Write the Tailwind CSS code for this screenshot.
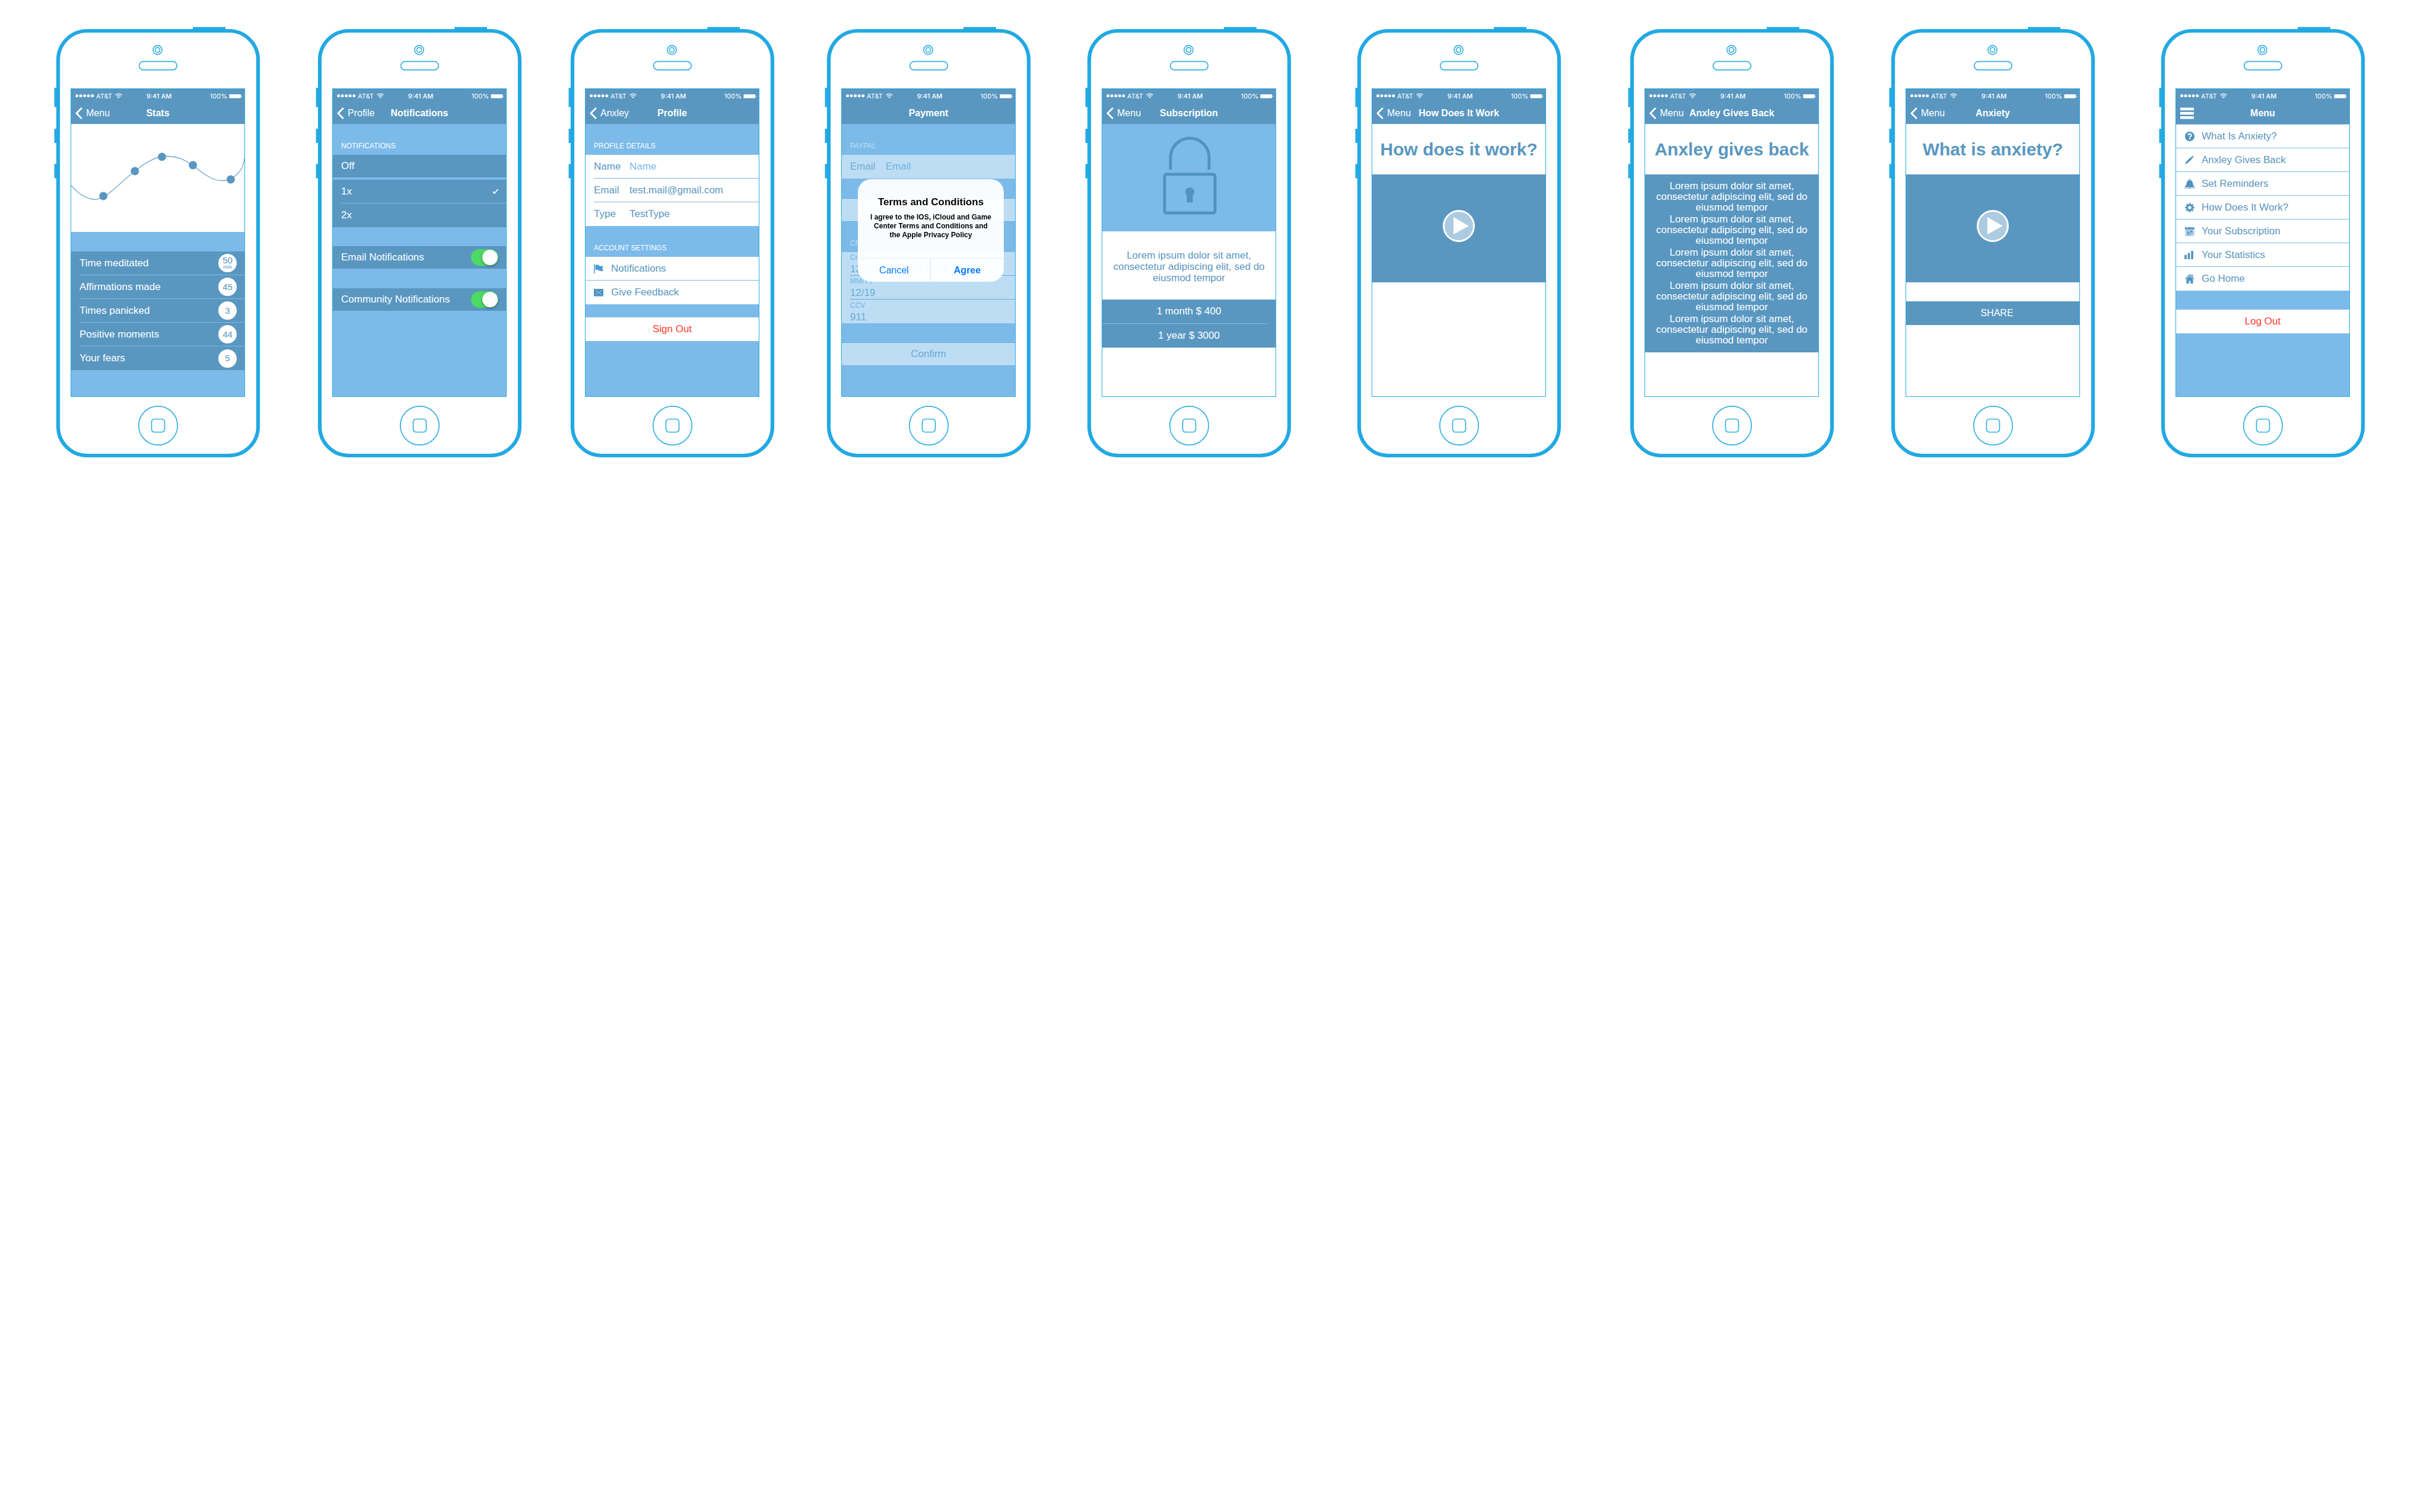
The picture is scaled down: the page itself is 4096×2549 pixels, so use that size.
<!DOCTYPE html>
<html lang="en">
<head>
<meta charset="utf-8">
<title>Anxley – app screens</title>
<script src="https://cdn.jsdelivr.net/npm/@tailwindcss/browser@4"></script>
</head>
<body class="min-h-screen bg-white font-['Liberation_Sans',Arial,sans-serif] text-[17px] leading-5 text-[#5997c1]">

<!-- Shared shapes -->
<svg class="hidden">
  <symbol id="frame" viewBox="-4 -4 351 726">
    <g fill="#27abe3">
      <rect x="-3.5" y="99" width="6" height="32.5"/>
      <rect x="-3.5" y="168" width="6" height="24"/>
      <rect x="-3.5" y="227.5" width="6" height="24"/>
      <rect x="230" y="-3.5" width="55" height="5"/>
    </g>
    <rect x="3" y="3" width="337" height="716" rx="49" fill="#fff" stroke="#22a9e3" stroke-width="6.2"/>
    <g fill="none" stroke="#33b0e5" stroke-width="1.7">
      <circle cx="170.5" cy="35.2" r="7.6"/>
      <circle cx="170.5" cy="35.2" r="4"/>
      <rect x="139.7" y="54.7" width="63.5" height="14.2" rx="7"/>
      <circle cx="171.5" cy="668.5" r="32.7"/>
      <rect x="160.5" y="657.5" width="22" height="22" rx="5"/>
    </g>
  </symbol>
  <symbol id="signal" viewBox="0 0 32 5">
    <g fill="#fff"><circle cx="2.6" cy="2.5" r="2.5"/><circle cx="9.1" cy="2.5" r="2.5"/><circle cx="15.7" cy="2.5" r="2.5"/><circle cx="22.2" cy="2.5" r="2.5"/><circle cx="28.8" cy="2.5" r="2.5"/></g>
  </symbol>
  <symbol id="wifi" viewBox="0 0 12 9">
    <g fill="none" stroke="#fff" stroke-width="1.4"><path d="M.6 3.3a7.7 7.7 0 0 1 10.800 0"/><path d="M2.6 5.4a4.9 4.9 0 0 1 6.800 0"/></g>
    <path fill="#fff" d="M4.2 6.900a2.6 2.6 0 0 1 3.600 0L6 8.700z"/>
  </symbol>
  <symbol id="battery" viewBox="0 0 23 8">
    <rect x=".4" y=".9" width="19.7" height="6.7" rx="1" fill="#fff"/><path d="M21.2 2.700c1.400.5 1.400 2.500 0 3z" fill="#fff"/>
  </symbol>
  <symbol id="back" viewBox="0 0 12 20">
    <path d="M10.800 1 2 10l8.800 9" fill="none" stroke="#fff" stroke-width="2.8"/>
  </symbol>
  <symbol id="play" viewBox="0 0 54 54">
    <circle cx="27" cy="27" r="25.5" fill="#fff" fill-opacity=".5" stroke="#fff" stroke-width="3"/>
    <path d="M18 12 44 27 18 41z" fill="#fff"/>
  </symbol>
</svg>

<main class="grid grid-cols-[95fr_343px_98fr_343px_83fr_343px_89fr_343px_96fr_343px_112fr_343px_117fr_343px_97fr_343px_112fr_343px_110fr] items-start pt-[49px]">

  <!-- Stats -->
  <article class="relative col-start-2 pt-[100px] pr-[25px] pb-[102px] pl-6">
    <svg class="absolute -top-1 -left-1 h-[726px] w-[351px]"><use href="#frame"/></svg>
    <div class="relative flex h-[520px] flex-col border border-[#27abe3] bg-[#7cbbe9] text-white">
      <header class="bg-[#5997c1]">
        <div class="grid h-[23px] grid-cols-3 items-center px-[7px] pr-[3px] font-['Inter',sans-serif] text-[11px] leading-4">
          <span class="flex items-center gap-[3px]"><svg class="h-[5px] w-8 shrink-0"><use href="#signal"/></svg>AT&amp;T<svg class="ml-0.5 h-[9px] w-3 shrink-0"><use href="#wifi"/></svg></span>
          <span class="text-center font-medium">9:41 AM</span>
          <span class="flex items-center justify-end gap-[3px]">100%<svg class="h-2 w-[23px]"><use href="#battery"/></svg></span>
        </div>
        <div class="grid h-9 items-center text-[16px]">
          <a href="#" class="col-start-1 row-start-1 flex items-center gap-1.5 justify-self-start pl-[7px]"><svg class="h-5 w-3"><use href="#back"/></svg>Menu</a>
          <h1 class="pointer-events-none col-start-1 row-start-1 text-center font-bold">Stats</h1>
        </div>
      </header>
      <svg class="block h-[182px] w-full bg-white" viewBox="0 0 291 182" preserveAspectRatio="none">
        <path d="M0 103.5C12 119 27 127 41 127 59 127 79 101 107 79.5 127 63 143 54.5 160.5 54.5 178 54.5 190 60 204.5 69.5 221 83 236 95.5 253 95.5 272 95.5 289 80 291 58" fill="none" stroke="#6fa5ca" stroke-width="1.3"/>
        <g fill="#5997c1"><circle cx="54" cy="121.5" r="6.9"/><circle cx="107" cy="79.5" r="6.9"/><circle cx="152.5" cy="55.3" r="6.9"/><circle cx="204.5" cy="69.5" r="6.9"/><circle cx="268" cy="93.5" r="6.9"/></g>
      </svg>
      <ul class="mt-[33px] bg-[#5997c1] pl-3.5">
        <li class="flex h-10 items-center justify-between border-b border-[#7cbbe9] pr-[13px]">Time meditated <span class="flex size-[31px] flex-col items-center justify-center rounded-full bg-white text-[15px] leading-[14px] text-[#5997c1]">50<span class="text-[9px] leading-[9px]">min</span></span></li>
        <li class="flex h-10 items-center justify-between border-b border-[#7cbbe9] pr-[13px]">Affirmations made <span class="flex size-[31px] items-center justify-center rounded-full bg-white text-[15px] text-[#5997c1]">45</span></li>
        <li class="flex h-10 items-center justify-between border-b border-[#7cbbe9] pr-[13px]">Times panicked <span class="flex size-[31px] items-center justify-center rounded-full bg-white text-[15px] text-[#5997c1]">3</span></li>
        <li class="flex h-10 items-center justify-between border-b border-[#7cbbe9] pr-[13px]">Positive moments <span class="flex size-[31px] items-center justify-center rounded-full bg-white text-[15px] text-[#5997c1]">44</span></li>
        <li class="flex h-10 items-center justify-between pr-[13px]">Your fears <span class="flex size-[31px] items-center justify-center rounded-full bg-white text-[15px] text-[#5997c1]">5</span></li>
      </ul>
    </div>
  </article>

  <!-- Notifications -->
  <article class="relative col-start-4 pt-[100px] pr-[25px] pb-[102px] pl-6">
    <svg class="absolute -top-1 -left-1 h-[726px] w-[351px]"><use href="#frame"/></svg>
    <div class="relative flex h-[520px] flex-col border border-[#27abe3] bg-[#7cbbe9] text-white">
      <header class="bg-[#5997c1]">
        <div class="grid h-[23px] grid-cols-3 items-center px-[7px] pr-[3px] font-['Inter',sans-serif] text-[11px] leading-4">
          <span class="flex items-center gap-[3px]"><svg class="h-[5px] w-8 shrink-0"><use href="#signal"/></svg>AT&amp;T<svg class="ml-0.5 h-[9px] w-3 shrink-0"><use href="#wifi"/></svg></span>
          <span class="text-center font-medium">9:41 AM</span>
          <span class="flex items-center justify-end gap-[3px]">100%<svg class="h-2 w-[23px]"><use href="#battery"/></svg></span>
        </div>
        <div class="grid h-9 items-center text-[16px]">
          <a href="#" class="col-start-1 row-start-1 flex items-center gap-1.5 justify-self-start pl-[7px]"><svg class="h-5 w-3"><use href="#back"/></svg>Profile</a>
          <h1 class="pointer-events-none col-start-1 row-start-1 text-center font-bold">Notifications</h1>
        </div>
      </header>
      <fieldset>
        <legend class="flex h-[52px] items-end pb-[7px] pl-3.5 text-[12px] leading-4">NOTIFICATIONS</legend>
        <label class="flex h-[38px] items-center justify-between bg-[#5997c1] pr-[13px] pl-3.5"><input type="radio" name="frequency" class="peer sr-only">Off<svg class="hidden h-[9px] w-2.5 peer-checked:block" viewBox="0 0 10 9"><path d="M.7 5 3.5 7.8 9.3 1" fill="none" stroke="#fff" stroke-width="1.8"/></svg></label>
        <div class="mt-1 bg-[#5997c1] pl-3.5">
          <label class="flex h-10 items-center justify-between border-b border-[#7cbbe9] pr-[13px]"><input type="radio" name="frequency" class="peer sr-only" checked>1x<svg class="hidden h-[9px] w-2.5 peer-checked:block" viewBox="0 0 10 9"><path d="M.7 5 3.5 7.8 9.3 1" fill="none" stroke="#fff" stroke-width="1.8"/></svg></label>
          <label class="flex h-10 items-center justify-between pr-[13px]"><input type="radio" name="frequency" class="peer sr-only">2x<svg class="hidden h-[9px] w-2.5 peer-checked:block" viewBox="0 0 10 9"><path d="M.7 5 3.5 7.8 9.3 1" fill="none" stroke="#fff" stroke-width="1.8"/></svg></label>
        </div>
      </fieldset>
      <label class="mt-8 flex h-[38px] items-center justify-between bg-[#5997c1] pr-[13px] pl-3.5">Email Notifications<input type="checkbox" checked class="flex h-7 w-[46px] appearance-none items-center rounded-full bg-[#7cbbe9] p-px before:size-[26px] before:rounded-full before:bg-white before:shadow-[0_2px_4px_rgba(0,0,0,0.35)] checked:justify-end checked:bg-[#4cd964]"></label>
      <label class="mt-[33px] flex h-[38px] items-center justify-between bg-[#5997c1] pr-[13px] pl-3.5">Community Notifications<input type="checkbox" checked class="flex h-7 w-[46px] appearance-none items-center rounded-full bg-[#7cbbe9] p-px before:size-[26px] before:rounded-full before:bg-white before:shadow-[0_2px_4px_rgba(0,0,0,0.35)] checked:justify-end checked:bg-[#4cd964]"></label>
    </div>
  </article>

  <!-- Profile -->
  <article class="relative col-start-6 pt-[100px] pr-[25px] pb-[102px] pl-6">
    <svg class="absolute -top-1 -left-1 h-[726px] w-[351px]"><use href="#frame"/></svg>
    <div class="relative flex h-[520px] flex-col border border-[#27abe3] bg-[#7cbbe9]">
      <header class="bg-[#5997c1] text-white">
        <div class="grid h-[23px] grid-cols-3 items-center px-[7px] pr-[3px] font-['Inter',sans-serif] text-[11px] leading-4">
          <span class="flex items-center gap-[3px]"><svg class="h-[5px] w-8 shrink-0"><use href="#signal"/></svg>AT&amp;T<svg class="ml-0.5 h-[9px] w-3 shrink-0"><use href="#wifi"/></svg></span>
          <span class="text-center font-medium">9:41 AM</span>
          <span class="flex items-center justify-end gap-[3px]">100%<svg class="h-2 w-[23px]"><use href="#battery"/></svg></span>
        </div>
        <div class="grid h-9 items-center text-[16px]">
          <a href="#" class="col-start-1 row-start-1 flex items-center gap-1.5 justify-self-start pl-[7px]"><svg class="h-5 w-3"><use href="#back"/></svg>Anxley</a>
          <h1 class="pointer-events-none col-start-1 row-start-1 text-center font-bold">Profile</h1>
        </div>
      </header>
      <h2 class="flex h-[52px] items-end pb-[7px] pl-3.5 text-[12px] leading-4 text-white">PROFILE DETAILS</h2>
      <div class="bg-white pl-3.5">
        <div class="flex h-10 items-center border-b border-[#7cbbe9]"><label for="name" class="w-[60px]">Name</label><input id="name" type="text" placeholder="Name" class="min-w-0 flex-1 placeholder:text-[#7cbbe9] placeholder:opacity-100"></div>
        <div class="flex h-10 items-center border-b border-[#8fb4cc]"><label for="email" class="w-[60px]">Email</label><input id="email" type="email" value="test.mail@gmail.com" class="min-w-0 flex-1"></div>
        <div class="flex h-10 items-center"><label for="type" class="w-[60px]">Type</label><input id="type" type="text" value="TestType" class="min-w-0 flex-1"></div>
      </div>
      <h2 class="flex h-[52px] items-end pb-[7px] pl-3.5 text-[12px] leading-4 text-white">ACCOUNT SETTINGS</h2>
      <nav class="bg-white">
        <a href="#" class="flex h-10 items-center gap-[13px] border-b border-[#7cbbe9] pl-3.5">
          <svg class="h-4 w-4" viewBox="0 0 16 16" fill="#4f9bd0"><path d="M0 .5h1.600V16H0z"/><path d="M2.600 1.500C5 .8 6.500 1.300 8.500 2.600 10.500 4 13 4.200 16 3l-1.800 4.400L16 11.600c-3 1-5.200.6-7.300-.6C6.500 9.700 5 9.500 2.600 10.300z"/></svg>Notifications</a>
        <a href="#" class="flex h-10 items-center gap-[13px] pl-3.5">
          <svg class="h-4 w-4" viewBox="0 0 16 16"><path fill="#4f93c1" d="M0 2h16v12.500H0z"/><path d="m3 4.500 5 4.200 5-4.200M3 12l3.500-3.200M13 12 9.500 8.800" fill="none" stroke="#cfe2f0" stroke-width=".8"/></svg>Give Feedback</a>
      </nav>
      <button type="button" class="mt-[22px] h-10 bg-white text-[#ff3b30]">Sign Out</button>
    </div>
  </article>

  <!-- Payment -->
  <article class="relative col-start-8 pt-[100px] pr-[25px] pb-[102px] pl-6">
    <svg class="absolute -top-1 -left-1 h-[726px] w-[351px]"><use href="#frame"/></svg>
    <div class="relative flex h-[520px] flex-col border border-[#27abe3] bg-[#7cbbe9]">
      <header class="bg-[#5997c1] text-white">
        <div class="grid h-[23px] grid-cols-3 items-center px-[7px] pr-[3px] font-['Inter',sans-serif] text-[11px] leading-4">
          <span class="flex items-center gap-[3px]"><svg class="h-[5px] w-8 shrink-0"><use href="#signal"/></svg>AT&amp;T<svg class="ml-0.5 h-[9px] w-3 shrink-0"><use href="#wifi"/></svg></span>
          <span class="text-center font-medium">9:41 AM</span>
          <span class="flex items-center justify-end gap-[3px]">100%<svg class="h-2 w-[23px]"><use href="#battery"/></svg></span>
        </div>
        <h1 class="flex h-9 items-center justify-center text-[16px] font-bold">Payment</h1>
      </header>
      <form class="flex flex-col opacity-50">
        <h2 class="flex h-[52px] items-end pb-[7px] pl-3.5 text-[12px] leading-4 text-white">PAYPAL</h2>
        <div class="flex h-10 items-center bg-white pl-3.5"><label for="paypal" class="w-[60px]">Email</label><input id="paypal" type="email" placeholder="Email" class="min-w-0 flex-1 placeholder:text-[#5ba8df] placeholder:opacity-100"></div>
        <button type="button" class="mt-[33px] h-10 border-y border-[#5997c1] bg-white">Confirm</button>
        <h2 class="flex h-[51px] items-end pb-[7px] pl-3.5 text-[12px] leading-4 text-white">CREDIT CARD</h2>
        <div class="bg-white pl-3.5">
          <div class="flex h-10 flex-col justify-end border-b border-[#4b9bd6]"><label for="card" class="text-[12px] leading-4 text-[#5ba8df]">Credit Card Number</label><input id="card" type="text" value="1234 5678 1234 5678" class="h-[22px] pt-0.5"></div>
          <div class="flex h-10 flex-col justify-end border-b border-[#4b9bd6]"><label for="expiry" class="text-[12px] leading-4 text-[#5ba8df]">MM/YY</label><input id="expiry" type="text" value="12/19" class="h-[22px] pt-0.5"></div>
          <div class="flex h-10 flex-col justify-end"><label for="ccv" class="text-[12px] leading-4 text-[#5ba8df]">CCV</label><input id="ccv" type="text" value="911" class="h-[22px] pt-0.5"></div>
        </div>
        <button type="button" class="mt-8 h-10 border-y border-[#5997c1] bg-white">Confirm</button>
      </form>
      <div role="dialog" aria-labelledby="terms" class="absolute top-[152px] left-[27px] w-[246px] rounded-[22px] bg-white/95 pt-7 text-center text-black">
        <h2 id="terms" class="leading-[22px] font-bold">Terms and Conditions</h2>
        <p class="mt-[7px] px-3.5 pb-[31px] text-[12px] leading-[15px] font-bold">I agree to the IOS, iCloud and Game Center Terms and Conditions and<br>the Apple Privacy Policy</p>
        <div class="grid h-10 grid-cols-2 divide-x divide-[#dfe6ea] border-t border-[#e9eef1] text-[16px] text-[#007aff]">
          <button type="button">Cancel</button>
          <button type="button" class="font-bold">Agree</button>
        </div>
      </div>
    </div>
  </article>

  <!-- Subscription -->
  <article class="relative col-start-10 pt-[100px] pr-[25px] pb-[102px] pl-6">
    <svg class="absolute -top-1 -left-1 h-[726px] w-[351px]"><use href="#frame"/></svg>
    <div class="relative flex h-[520px] flex-col border border-[#27abe3] bg-white">
      <header class="bg-[#5997c1] text-white">
        <div class="grid h-[23px] grid-cols-3 items-center px-[7px] pr-[3px] font-['Inter',sans-serif] text-[11px] leading-4">
          <span class="flex items-center gap-[3px]"><svg class="h-[5px] w-8 shrink-0"><use href="#signal"/></svg>AT&amp;T<svg class="ml-0.5 h-[9px] w-3 shrink-0"><use href="#wifi"/></svg></span>
          <span class="text-center font-medium">9:41 AM</span>
          <span class="flex items-center justify-end gap-[3px]">100%<svg class="h-2 w-[23px]"><use href="#battery"/></svg></span>
        </div>
        <div class="grid h-9 items-center text-[16px]">
          <a href="#" class="col-start-1 row-start-1 flex items-center gap-1.5 justify-self-start pl-[7px]"><svg class="h-5 w-3"><use href="#back"/></svg>Menu</a>
          <h1 class="pointer-events-none col-start-1 row-start-1 text-center font-bold">Subscription</h1>
        </div>
      </header>
      <svg class="block h-[181px] w-full bg-[#7cbbe9]" viewBox="0 0 291 181">
        <g fill="none" stroke="#5093c0" stroke-width="5"><path d="M114.500 77V56.500a32.500 32.500 0 0 1 65 0V77"/><rect x="104.5" y="84.8" width="85" height="65.2" rx="3.5"/></g>
        <circle cx="147" cy="114.7" r="7.6" fill="#5093c0"/><path d="M142 116h10v16.300h-10z" fill="#5093c0"/>
      </svg>
      <p class="h-[115px] px-3 pt-[31px] text-center leading-[19px]">Lorem ipsum dolor sit amet, consectetur adipiscing elit, sed do eiusmod tempor</p>
      <div class="flex flex-col bg-[#5997c1] text-white">
        <button type="button" class="h-10">1 month $ 400</button>
        <hr class="mr-3.5 border-t border-[#7cbbe9]">
        <button type="button" class="h-10">1 year $ 3000</button>
      </div>
    </div>
  </article>

  <!-- How does it work -->
  <article class="relative col-start-12 pt-[100px] pr-[25px] pb-[102px] pl-6">
    <svg class="absolute -top-1 -left-1 h-[726px] w-[351px]"><use href="#frame"/></svg>
    <div class="relative flex h-[520px] flex-col border border-[#27abe3] bg-white">
      <header class="bg-[#5997c1] text-white">
        <div class="grid h-[23px] grid-cols-3 items-center px-[7px] pr-[3px] font-['Inter',sans-serif] text-[11px] leading-4">
          <span class="flex items-center gap-[3px]"><svg class="h-[5px] w-8 shrink-0"><use href="#signal"/></svg>AT&amp;T<svg class="ml-0.5 h-[9px] w-3 shrink-0"><use href="#wifi"/></svg></span>
          <span class="text-center font-medium">9:41 AM</span>
          <span class="flex items-center justify-end gap-[3px]">100%<svg class="h-2 w-[23px]"><use href="#battery"/></svg></span>
        </div>
        <div class="grid h-9 items-center text-[16px]">
          <a href="#" class="col-start-1 row-start-1 flex items-center gap-1.5 justify-self-start pl-[7px]"><svg class="h-5 w-3"><use href="#back"/></svg>Menu</a>
          <h1 class="pointer-events-none col-start-1 row-start-1 text-center font-bold">How Does It Work</h1>
        </div>
      </header>
      <h2 class="flex h-[85px] items-center justify-center text-[30px] font-bold whitespace-nowrap">How does it work?</h2>
      <div class="flex h-[182px] items-center justify-center bg-[#5997c1] pb-[9px]"><button type="button" aria-label="Play" class="size-[54px]"><svg class="size-full"><use href="#play"/></svg></button></div>
    </div>
  </article>

  <!-- Anxley gives back -->
  <article class="relative col-start-14 pt-[100px] pr-[25px] pb-[102px] pl-6">
    <svg class="absolute -top-1 -left-1 h-[726px] w-[351px]"><use href="#frame"/></svg>
    <div class="relative flex h-[520px] flex-col border border-[#27abe3] bg-white">
      <header class="bg-[#5997c1] text-white">
        <div class="grid h-[23px] grid-cols-3 items-center px-[7px] pr-[3px] font-['Inter',sans-serif] text-[11px] leading-4">
          <span class="flex items-center gap-[3px]"><svg class="h-[5px] w-8 shrink-0"><use href="#signal"/></svg>AT&amp;T<svg class="ml-0.5 h-[9px] w-3 shrink-0"><use href="#wifi"/></svg></span>
          <span class="text-center font-medium">9:41 AM</span>
          <span class="flex items-center justify-end gap-[3px]">100%<svg class="h-2 w-[23px]"><use href="#battery"/></svg></span>
        </div>
        <div class="grid h-9 items-center text-[16px]">
          <a href="#" class="col-start-1 row-start-1 flex items-center gap-1.5 justify-self-start pl-[7px]"><svg class="h-5 w-3"><use href="#back"/></svg>Menu</a>
          <h1 class="pointer-events-none col-start-1 row-start-1 text-center font-bold">Anxley Gives Back</h1>
        </div>
      </header>
      <h2 class="flex h-[85px] items-center justify-center text-[30px] font-bold whitespace-nowrap">Anxley gives back</h2>
      <div class="flex flex-col gap-0.5 bg-[#5997c1] px-3 py-[11px] text-center leading-[18px] text-white">
        <p>Lorem ipsum dolor sit amet, consectetur adipiscing elit, sed do eiusmod tempor</p>
        <p>Lorem ipsum dolor sit amet, consectetur adipiscing elit, sed do eiusmod tempor</p>
        <p>Lorem ipsum dolor sit amet, consectetur adipiscing elit, sed do eiusmod tempor</p>
        <p>Lorem ipsum dolor sit amet, consectetur adipiscing elit, sed do eiusmod tempor</p>
        <p>Lorem ipsum dolor sit amet, consectetur adipiscing elit, sed do eiusmod tempor</p>
      </div>
    </div>
  </article>

  <!-- Anxiety -->
  <article class="relative col-start-16 pt-[100px] pr-[25px] pb-[102px] pl-6">
    <svg class="absolute -top-1 -left-1 h-[726px] w-[351px]"><use href="#frame"/></svg>
    <div class="relative flex h-[520px] flex-col border border-[#27abe3] bg-white">
      <header class="bg-[#5997c1] text-white">
        <div class="grid h-[23px] grid-cols-3 items-center px-[7px] pr-[3px] font-['Inter',sans-serif] text-[11px] leading-4">
          <span class="flex items-center gap-[3px]"><svg class="h-[5px] w-8 shrink-0"><use href="#signal"/></svg>AT&amp;T<svg class="ml-0.5 h-[9px] w-3 shrink-0"><use href="#wifi"/></svg></span>
          <span class="text-center font-medium">9:41 AM</span>
          <span class="flex items-center justify-end gap-[3px]">100%<svg class="h-2 w-[23px]"><use href="#battery"/></svg></span>
        </div>
        <div class="grid h-9 items-center text-[16px]">
          <a href="#" class="col-start-1 row-start-1 flex items-center gap-1.5 justify-self-start pl-[7px]"><svg class="h-5 w-3"><use href="#back"/></svg>Menu</a>
          <h1 class="pointer-events-none col-start-1 row-start-1 text-center font-bold">Anxiety</h1>
        </div>
      </header>
      <h2 class="flex h-[85px] items-center justify-center text-[30px] font-bold whitespace-nowrap">What is anxiety?</h2>
      <div class="flex h-[182px] items-center justify-center bg-[#5997c1] pb-[9px]"><button type="button" aria-label="Play" class="size-[54px]"><svg class="size-full"><use href="#play"/></svg></button></div>
      <button type="button" class="mt-8 h-10 bg-[#5997c1] pl-3.5 text-[16px] text-white">SHARE</button>
    </div>
  </article>

  <!-- Menu -->
  <article class="relative col-start-18 pt-[100px] pr-[25px] pb-[102px] pl-6">
    <svg class="absolute -top-1 -left-1 h-[726px] w-[351px]"><use href="#frame"/></svg>
    <div class="relative flex h-[520px] flex-col border border-[#27abe3] bg-[#7cbbe9]">
      <header class="bg-[#5997c1] text-white">
        <div class="grid h-[23px] grid-cols-3 items-center px-[7px] pr-[3px] font-['Inter',sans-serif] text-[11px] leading-4">
          <span class="flex items-center gap-[3px]"><svg class="h-[5px] w-8 shrink-0"><use href="#signal"/></svg>AT&amp;T<svg class="ml-0.5 h-[9px] w-3 shrink-0"><use href="#wifi"/></svg></span>
          <span class="text-center font-medium">9:41 AM</span>
          <span class="flex items-center justify-end gap-[3px]">100%<svg class="h-2 w-[23px]"><use href="#battery"/></svg></span>
        </div>
        <div class="grid h-9 items-center text-[16px]">
          <button type="button" aria-label="Close menu" class="col-start-1 row-start-1 ml-[7px] justify-self-start"><svg class="block h-5 w-[23px]" viewBox="0 0 23 20"><path d="M0 .5h23v4.500H0zM0 7.800h23v4.500H0zM0 15.100h23v4.500H0z" fill="#fff"/></svg></button>
          <h1 class="pointer-events-none col-start-1 row-start-1 text-center font-bold">Menu</h1>
        </div>
      </header>
      <nav class="mt-px divide-y divide-[#7cbbe9] bg-white">
        <a href="#" class="flex h-10 items-center gap-3 pl-[15px]"><svg class="size-4" viewBox="0 0 16 16"><circle cx="8" cy="8" r="8" fill="#4f93c1"/><path d="M5.400 6.100C5.400 2.800 10.700 2.900 10.700 6c0 1.900-2.300 1.900-2.500 3.600" fill="none" stroke="#fff" stroke-width="2.1"/><path d="M7 10.700h2.300v2.200H7z" fill="#fff"/></svg>What Is Anxiety?</a>
        <a href="#" class="flex h-10 items-center gap-3 pl-[15px]"><svg class="size-4" viewBox="0 0 16 16"><path d="M.3 14.700 2 10.600 10.200 2.600l2.400 2.400-8.300 8zM10.900 1.900 12 .9c.6-.6 3 1.700 2.300 2.400l-1.100 1.100z" fill="#4f93c1"/></svg>Anxley Gives Back</a>
        <a href="#" class="flex h-10 items-center gap-3 pl-[15px]"><svg class="size-4 overflow-visible" viewBox="0 0 16 16"><circle cx="8" cy="1.5" r="1.7" fill="none" stroke="#7fb0d2"/><path d="M8 1.700c3.300 0 4.600 2 5.200 5 .6 3 1.100 4.800 3.100 6.500H-.3c2-1.700 2.500-3.500 3.100-6.500.6-3 1.900-5 5.200-5z" fill="#4f93c1"/><path d="M-.3 13.500h16.600v1.700H-.3z" fill="#fff" stroke="#7fb0d2" stroke-width=".9"/><path d="M6.500 13.600h3v1.700h-3z" fill="#7fb0d2"/></svg>Set Reminders</a>
        <a href="#" class="flex h-10 items-center gap-3 pl-[15px]"><svg class="size-4" viewBox="0 0 16 16"><g stroke="#4f93c1" stroke-width="3"><path d="M8 .2V4M8 12v3.800M.2 8H4M12 8h3.800M2.500 2.500l2.700 2.700M10.800 10.800l2.700 2.700M13.500 2.500l-2.700 2.700M5.200 10.800l-2.700 2.700"/></g><circle cx="8" cy="8" r="4.3" fill="#fff" stroke="#4f93c1" stroke-width="3"/></svg>How Does It Work?</a>
        <a href="#" class="flex h-10 items-center gap-3 pl-[15px]"><svg class="size-4" viewBox="0 0 16 16"><path d="M.2 4.500h15.200v11H.2z" fill="#cfe2ef" stroke="#8db9d6" stroke-width=".6"/><path d="M0 1h2.200v1h3V1h5.400v1h2.800V1h2.200v3.600H0z" fill="#4f93c1"/><path d="M2.500 0h2v1.600h-2zM11 0h2v1.600h-2z" fill="#a9cbe1"/><path d="M2 7h11.500M2 9.600h11.500M2 12.200h11.500M2 14.200h8M4.300 6v8.200M7 6v8.200M9.700 6v8.200M12.300 6v6" fill="none" stroke="#5f9dc7" stroke-width=".8"/><path d="M9.500 7h2.800v2.600H9.500zM4.300 9.600H7v2.600H4.300z" fill="#4f93c1"/></svg>Your Subscription</a>
        <a href="#" class="flex h-10 items-center gap-3 pl-[15px]"><svg class="size-4 overflow-visible" viewBox="0 0 16 16"><path d="M-.8 7.800h3.700V15H-.8zM4.700 4.500h3.600V15H4.700zM10.300 1h3.600v14h-3.600z" fill="#4f93c1"/></svg>Your Statistics</a>
        <a href="#" class="flex h-10 items-center gap-3 pl-[15px]"><svg class="size-4" viewBox="0 0 16 16"><path d="M8 0 16 7.500l-1 1.200L8 2.500 1 8.700 0 7.500zM11.200 1h2.200v3.400l-2.200-2z" fill="#5f9dc7"/><path d="M8 3.600l5.600 5V16H2.400V8.600z" fill="#4f93c1"/><path d="M6.300 11.500h3.400V16H6.300z" fill="#cfe2ef"/></svg>Go Home</a>
      </nav>
      <button type="button" class="mt-8 h-10 bg-white text-[#ff3b30]">Log Out</button>
    </div>
  </article>
</main>
</body>
</html>
